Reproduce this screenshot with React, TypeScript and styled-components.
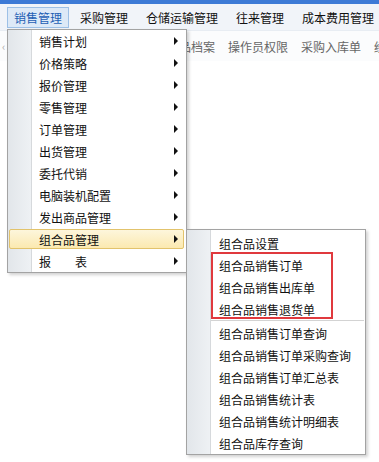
import React from "react";
import styled, { createGlobalStyle } from "styled-components";

const Global = createGlobalStyle`
  html, body { margin: 0; padding: 0; background: #fff; }
  body { font-family: "Noto Sans CJK SC", "Noto Sans", sans-serif; font-size: 12px; color: #111; }
`;

const Page = styled.div`
  position: relative;
  width: 379px;
  height: 462px;
  overflow: hidden;
  background: #fff;
`;

const TopStrip = styled.div`
  height: 4px;
  background: #3d7ad6;
`;

const MenuBar = styled.div`
  height: 26px;
  display: flex;
  align-items: center;
  gap: 4px;
  padding-left: 7px;
  background: #f1f4f9;
`;

const BarItem = styled.div<{ $active?: boolean }>`
  height: 19px;
  line-height: 19px;
  padding: 0 6px;
  border: 1px solid ${(p) => (p.$active ? "#9dc0e6" : "transparent")};
  background: ${(p) => (p.$active ? "#dde9f7" : "transparent")};
  color: ${(p) => (p.$active ? "#1d5fb4" : "#111")};
  white-space: nowrap;
`;

const ToolBar = styled.div`
  height: 30px;
  display: flex;
  align-items: center;
  gap: 13px;
  padding-left: 2px;
  background: #fbfcfd;
  border-top: 1px solid #e8edf3;
  color: #666;
  white-space: nowrap;
`;

const ScrollMark = styled.span`
  color: #aaa;
  font-size: 11px;
  width: 152px;
  flex: none;
`;

const Menu = styled.div<{ $left: number; $top: number; $width: number; $padTop: number }>`
  position: absolute;
  left: ${(p) => p.$left}px;
  top: ${(p) => p.$top}px;
  width: ${(p) => p.$width}px;
  box-sizing: border-box;
  border: 1px solid #a3a3a3;
  box-shadow: 2px 2px 3px rgba(0, 0, 0, 0.18);
  background: linear-gradient(
    to right,
    #e2e6ea 0,
    #eef1f4 23px,
    #d6d9dc 23px,
    #d6d9dc 24px,
    #ffffff 24px,
    #ffffff 100%
  );
  display: flex;
  flex-direction: column;
  padding: ${(p) => p.$padTop}px 0 0 0;
`;

const Row = styled.div<{ $hot?: boolean }>`
  height: 18px;
  margin: 1px 2px 1px 1px;
  display: flex;
  align-items: center;
  padding-left: 29px;
  padding-right: 5px;
  border: 1px solid ${(p) => (p.$hot ? "#e2c36c" : "transparent")};
  border-radius: 2px;
  background: ${(p) =>
    p.$hot ? "linear-gradient(to bottom, #fdf6dc, #fbe9b0)" : "transparent"};
  color: #111;
  white-space: nowrap;
`;

const Label = styled.span`
  flex: 1;
`;

const Arrow = styled.span`
  width: 0;
  height: 0;
  border-top: 4px solid transparent;
  border-bottom: 4px solid transparent;
  border-left: 4px solid #111;
`;

const SubRow = styled.div`
  height: 22px;
  display: flex;
  align-items: center;
  padding-left: 32px;
  color: #111;
  white-space: nowrap;
`;

const Separator = styled.div`
  height: 1px;
  margin-left: 24px;
  margin-right: 1px;
  background: #d3d3d3;
  border-bottom: 1px solid #fff;
`;

const Highlight = styled.div`
  position: absolute;
  left: 24px;
  top: 22px;
  width: 122px;
  height: 67px;
  box-sizing: border-box;
  border: 2px solid #e0393e;
  pointer-events: none;
`;

const barItems = ["销售管理", "采购管理", "仓储运输管理", "往来管理", "成本费用管理"];
const toolItems = ["商品档案", "操作员权限", "采购入库单", "经营分析"];
const mainItems = [
  "销售计划",
  "价格策略",
  "报价管理",
  "零售管理",
  "订单管理",
  "出货管理",
  "委托代销",
  "电脑装机配置",
  "发出商品管理",
  "组合品管理",
  "报\u3000\u3000表",
];
const subTop = ["组合品设置", "组合品销售订单", "组合品销售出库单", "组合品销售退货单"];
const subBottom = [
  "组合品销售订单查询",
  "组合品销售订单采购查询",
  "组合品销售订单汇总表",
  "组合品销售统计表",
  "组合品销售统计明细表",
  "组合品库存查询",
];

export default function App() {
  return (
    <>
      <Global />
      <Page>
        <TopStrip />
        <MenuBar>
          {barItems.map((t, i) => (
            <BarItem key={t} $active={i === 0}>
              {t}
            </BarItem>
          ))}
        </MenuBar>
        <ToolBar>
          <ScrollMark>‹</ScrollMark>
          {toolItems.map((t) => (
            <span key={t}>{t}</span>
          ))}
        </ToolBar>

        <Menu $left={7} $top={29} $width={180} $padTop={0}>
          {mainItems.map((t) => (
            <Row key={t} $hot={t === "组合品管理"}>
              <Label>{t}</Label>
              <Arrow />
            </Row>
          ))}
        </Menu>

        <Menu $left={186} $top={229} $width={180} $padTop={2}>
          {subTop.map((t) => (
            <SubRow key={t}>{t}</SubRow>
          ))}
          <Separator />
          {subBottom.map((t) => (
            <SubRow key={t}>{t}</SubRow>
          ))}
          <Highlight />
        </Menu>
      </Page>
    </>
  );
}
